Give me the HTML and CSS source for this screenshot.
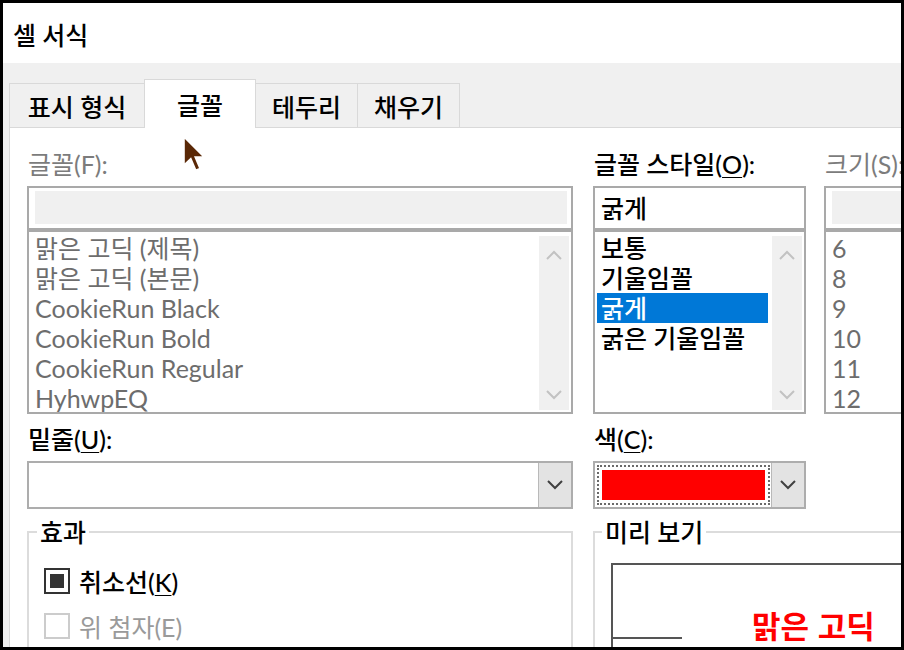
FILE: index.html
```html
<!DOCTYPE html>
<html lang="ko">
  <head>
    <meta charset="UTF-8" />
    <meta name="viewport" content="width=device-width, initial-scale=1.0" />
    <link rel="stylesheet" href="styles.css">
    <title>셀 서식</title>
  </head>
  <body>
    <div class="window">
      <div class="titlebar">셀 서식</div>

      <div class="tabs">
        <div class="tab tab-number">표시 형식</div>
        <div class="tab tab-font active">글꼴</div>
        <div class="tab tab-border">테두리</div>
        <div class="tab tab-fill">채우기</div>
      </div>

      <div class="panel">
        <div class="grid">
          <!-- font name -->
          <div class="field">
            <div class="label dim">글꼴(F):</div>
            <div class="entry"><div class="entry-fill"></div></div>
            <div class="listbox">
              <ul class="items grey">
                <li>맑은 고딕 (제목)</li>
                <li>맑은 고딕 (본문)</li>
                <li>CookieRun Black</li>
                <li>CookieRun Bold</li>
                <li>CookieRun Regular</li>
                <li>HyhwpEQ</li>
              </ul>
              <div class="scrollbar">
                <svg width="16" height="10" viewBox="0 0 16 10"><path d="M1 9 L8 2 L15 9" fill="none" stroke="#c2c2c2" stroke-width="2"/></svg>
                <svg width="16" height="10" viewBox="0 0 16 10"><path d="M1 1 L8 8 L15 1" fill="none" stroke="#c2c2c2" stroke-width="2"/></svg>
              </div>
            </div>
          </div>

          <!-- font style -->
          <div class="field">
            <div class="label">글꼴 스타일(<u>O</u>):</div>
            <div class="entry"><div class="entry-text">굵게</div></div>
            <div class="listbox">
              <ul class="items">
                <li>보통</li>
                <li>기울임꼴</li>
                <li class="selected">굵게</li>
                <li>굵은 기울임꼴</li>
              </ul>
              <div class="scrollbar">
                <svg width="16" height="10" viewBox="0 0 16 10"><path d="M1 9 L8 2 L15 9" fill="none" stroke="#c2c2c2" stroke-width="2"/></svg>
                <svg width="16" height="10" viewBox="0 0 16 10"><path d="M1 1 L8 8 L15 1" fill="none" stroke="#c2c2c2" stroke-width="2"/></svg>
              </div>
            </div>
          </div>

          <!-- size -->
          <div class="field size">
            <div class="label dim">크기(S):</div>
            <div class="entry"><div class="entry-fill"></div></div>
            <div class="listbox">
              <ul class="items grey">
                <li>6</li>
                <li>8</li>
                <li>9</li>
                <li>10</li>
                <li>11</li>
                <li>12</li>
              </ul>
            </div>
          </div>

          <!-- underline -->
          <div class="field row2">
            <div class="label">밑줄(<u>U</u>):</div>
            <div class="combo">
              <div class="combo-value"></div>
              <div class="combo-btn">
                <svg width="16" height="10" viewBox="0 0 16 10"><path d="M1 1 L8 8 L15 1" fill="none" stroke="#404040" stroke-width="2"/></svg>
              </div>
            </div>
          </div>

          <!-- colour -->
          <div class="field row2">
            <div class="label">색(<u>C</u>):</div>
            <div class="combo">
              <div class="combo-value color">
                <div class="focus"><div class="swatch"></div></div>
              </div>
              <div class="combo-btn">
                <svg width="16" height="10" viewBox="0 0 16 10"><path d="M1 1 L8 8 L15 1" fill="none" stroke="#404040" stroke-width="2"/></svg>
              </div>
            </div>
          </div>
          <div class="field row2"></div>

          <!-- effects -->
          <fieldset class="group effects">
            <legend>효과</legend>
            <div class="check first">
              <span class="box checked"><span class="mark"></span></span>
              <span>취소선(<u>K</u>)</span>
            </div>
            <div class="check disabled">
              <span class="box"></span>
              <span>위 첨자(E)</span>
            </div>
          </fieldset>

          <!-- preview -->
          <fieldset class="group preview">
            <legend>미리 보기</legend>
            <div class="preview-box">
              <div class="preview-text">맑은 고딕</div>
              <div class="gridline"></div>
            </div>
          </fieldset>
        </div>
      </div>

      <svg class="cursor" width="24" height="39" viewBox="0 0 12 19.5">
        <path d="M1 1 L1 15 L4.4 11.8 L6.9 17.6 L9 16.7 L6.6 11 L11 11 Z" fill="#5a2806" stroke="#ffffff" stroke-width="0.8"/>
      </svg>
    </div>
  </body>
</html>
```

FILE: styles.css
```css
body {
  margin: 0;
  padding: 0;
  font-family: Lato, "Noto Sans CJK KR", sans-serif;
  font-size: 25px;
  font-weight: 500;
  color: #000;
  background-color: #fff;
}

u {
  text-underline-offset: 3px;
  text-decoration-thickness: 1px;
}

.window {
  position: relative;
  width: 904px;
  height: 650px;
  box-sizing: border-box;
  border: 3px solid #000;
  background-color: #f0f0f0;
  display: flex;
  flex-direction: column;
  overflow: hidden;
}

.titlebar {
  flex: none;
  height: 60px;
  line-height: 64px;
  padding-left: 10px;
  background-color: #fff;
  white-space: nowrap;
}

/* tabs */
.tabs {
  flex: none;
  display: flex;
  align-items: flex-end;
  padding: 16px 0 0 6px;
}

.tab {
  height: 44px;
  box-sizing: border-box;
  border: 1px solid #d9d9d9;
  border-bottom: none;
  margin-left: -1px;
  display: flex;
  align-items: center;
  justify-content: center;
  white-space: nowrap;
}

.tab-number {
  width: 136px;
  margin-left: 0;
}

.tab-font {
  width: 112px;
}

.tab-border,
.tab-fill {
  width: 103px;
}

.tab.active {
  position: relative;
  z-index: 1;
  height: 49px;
  margin-bottom: -1px;
  background-color: #fff;
}

/* panel */
.panel {
  flex: 1;
  margin-left: 6px;
  border-top: 1px solid #d9d9d9;
  border-left: 1px solid #d9d9d9;
  background-color: #fff;
  padding: 21px 0 0 17px;
}

.grid {
  display: grid;
  grid-template-columns: 546px 213px 200px;
  column-gap: 20px;
}

.size {
  margin-left: -2px;
}

.label {
  height: 30px;
  line-height: 30px;
  padding-left: 1px;
  white-space: nowrap;
}

.dim {
  color: #7c7c7c;
  font-weight: 400;
}

.entry {
  margin-top: 7px;
  height: 44px;
  box-sizing: border-box;
  border: 2px solid #a9a9a9;
  padding: 3px 4px 4px 6px;
}

.entry-fill {
  height: 100%;
  background-color: #f0f0f0;
}

.entry-text {
  line-height: 34px;
}

.listbox {
  height: 184px;
  box-sizing: border-box;
  border: 2px solid #a9a9a9;
  display: flex;
  overflow: hidden;
}

.items {
  flex: 1;
  list-style: none;
  margin: 0 4px 0 0;
  padding: 1px 0 0 2px;
}

.items li {
  height: 30px;
  line-height: 30px;
  padding-left: 4px;
  white-space: nowrap;
}

.items.grey li {
  color: #6d6d6d;
  font-weight: 400;
}

.items li.selected {
  background-color: #0078d7;
  color: #fff;
}

.scrollbar {
  width: 30px;
  margin: 4px 2px 2px 0;
  background-color: #f0f0f0;
  display: flex;
  flex-direction: column;
  justify-content: space-between;
  align-items: center;
  padding: 14px 0 10px;
  box-sizing: border-box;
}

.scrollbar svg {
  display: block;
}

/* combo boxes */
.row2 {
  margin-top: 10px;
}

.combo {
  margin-top: 7px;
  height: 48px;
  box-sizing: border-box;
  border: 2px solid #adadad;
  display: flex;
}

.combo-value {
  flex: 1;
}

.combo-value.color {
  padding: 2px 1px 2px 2px;
}

.focus {
  height: 100%;
  box-sizing: border-box;
  border: 2px dotted #6a6a6a;
  padding: 3px;
}

.swatch {
  height: 100%;
  background-color: #ff0000;
}

.combo-btn {
  width: 32px;
  border-left: 1px solid #b9b9b9;
  background-color: #e3e3e3;
  display: flex;
  align-items: center;
  justify-content: center;
}

/* group boxes */
.group {
  margin: 8px 0 0 0;
  padding: 0 0 0 15px;
  border: 2px solid #dcdcdc;
  height: 200px;
  min-width: 0;
}

.group legend {
  height: 30px;
  line-height: 30px;
  padding: 0 3px;
  margin-left: -7px;
}

.preview {
  grid-column: span 2;
  padding-left: 16px;
}

.preview legend {
  margin-left: -9px;
}

.check {
  display: flex;
  align-items: center;
  height: 30px;
  margin-top: 15px;
  white-space: nowrap;
}

.check.first {
  margin-top: 19px;
}

.box {
  width: 26px;
  height: 26px;
  box-sizing: border-box;
  border: 2px solid #333;
  padding: 4px;
  margin-right: 9px;
  background-color: #fff;
}

.mark {
  display: block;
  width: 14px;
  height: 14px;
  background-color: #333;
}

.check.disabled {
  color: #9a9a9a;
  font-weight: 400;
}

.check.disabled .box {
  border-color: #cccccc;
}

.preview-box {
  position: relative;
  margin-top: 16px;
  height: 160px;
  border-top: 2px solid #555;
  border-left: 2px solid #555;
  padding: 40px 0 0 139px;
}

.preview-text {
  font-family: "Noto Sans CJK KR", sans-serif;
  font-weight: bold;
  font-size: 31px;
  line-height: 40px;
  color: #ff0000;
  white-space: nowrap;
}

.gridline {
  position: absolute;
  left: 0;
  top: 72px;
  width: 69px;
  height: 2px;
  background-color: #555;
}

.cursor {
  position: absolute;
  left: 179px;
  top: 132px;
}
```
